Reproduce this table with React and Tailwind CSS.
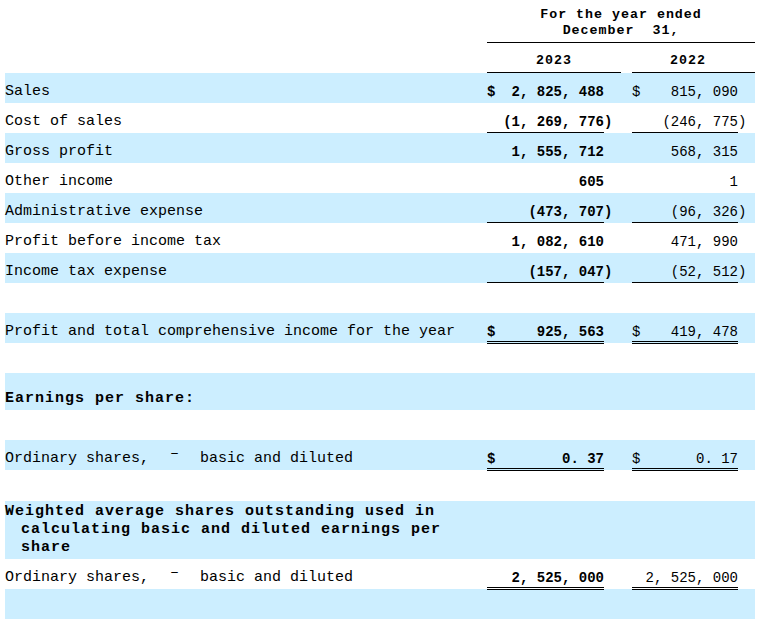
const GRID = 'grid grid-cols-[482px_13px_104px_17px_11px_13px_93px_17px]'

const LINES = [
  { label: 'Sales', blue: true, d1: '$', a: '2, 825, 488', d2: '$', b: '815, 090' },
  { label: 'Cost of sales', a: '(1, 269, 776', ap: ')', b: '(246, 775', bp: ')', rule: 'single' },
  { label: 'Gross profit', blue: true, a: '1, 555, 712', b: '568, 315' },
  { label: 'Other income', a: '605', b: '1' },
  { label: 'Administrative expense', blue: true, a: '(473, 707', ap: ')', b: '(96, 326', bp: ')', rule: 'single' },
  { label: 'Profit before income tax', a: '1, 082, 610', b: '471, 990' },
  { label: 'Income tax expense', blue: true, a: '(157, 047', ap: ')', b: '(52, 512', bp: ')', rule: 'single' },
  { blank: true },
  { label: 'Profit and total comprehensive income for the year', blue: true, d1: '$', a: '925, 563', d2: '$', b: '419, 478', rule: 'double' },
  { blank: true },
  { heading: 'Earnings per share:', blue: true, tall: true },
  { blank: true },
  { label: 'ordinary', blue: true, d1: '$', a: '0. 37', d2: '$', b: '0. 17', rule: 'double' },
  { blank: true, extra: true },
  { weighted: true, blue: true },
  { label: 'ordinary', a: '2, 525, 000', b: '2, 525, 000', rule: 'double' },
  { blank: true, blue: true },
]

const RULES = {
  single: 'border-b border-black',
  double: 'border-b-[3px] border-double border-black',
}

function Ordinary() {
  return (
    <>
      Ordinary shares,
      <span className="inline-block w-[51px] text-center relative -top-[5px]">–</span>
      basic and diluted
    </>
  )
}

function Line({ row }) {
  const bg = row.blue ? 'bg-[#cceeff]' : 'bg-white'

  if (row.blank) {
    return <div className={`${bg} ${row.extra ? 'h-[31px]' : 'h-[30px]'}`} />
  }

  if (row.heading) {
    return (
      <div className={`${bg} h-[37px] pt-[17px] leading-[18px] font-bold tracking-[1px]`}>
        {row.heading}
      </div>
    )
  }

  if (row.weighted) {
    return (
      <div className={`${GRID} ${bg} h-[58px]`}>
        <div className="pt-[2px] pl-[16px] -indent-[16px] leading-[18px] font-bold tracking-[1px]">
          Weighted average shares outstanding used in calculating basic and diluted earnings per share
        </div>
      </div>
    )
  }

  const rule = row.rule ? RULES[row.rule] : ''
  const cell = 'pt-[10px] leading-[18px] text-[14px]'

  return (
    <div className={`${GRID} ${bg} h-[30px]`}>
      <div className="pt-[10px] leading-[18px] whitespace-nowrap">
        {row.label === 'ordinary' ? <Ordinary /> : row.label}
      </div>
      <div className={`${cell} ${rule} font-bold`}>{row.d1}</div>
      <div className={`${cell} ${rule} font-bold text-right`}>{row.a}</div>
      <div className={`${cell} font-bold`}>{row.ap}</div>
      <div />
      <div className={`${cell} ${rule}`}>{row.d2}</div>
      <div className={`${cell} ${rule} text-right`}>{row.b}</div>
      <div className={cell}>{row.bp}</div>
    </div>
  )
}

export default function App() {
  return (
    <div className="min-h-[625px] w-[759px] bg-white text-black pl-[5px] font-['Liberation_Mono',monospace] text-[15px]">
      <div className="w-[750px]">
        {/* column header */}
        <div className={`${GRID} h-[43px]`}>
          <div className="col-start-2 col-span-7 border-b border-black pt-[7px] leading-[16px] text-center text-[13.3px] font-bold tracking-[1px]">
            <div>For the year ended</div>
            <div className="whitespace-pre">December  31,</div>
          </div>
        </div>
        <div className={`${GRID} h-[30px]`}>
          <div className="col-start-2 col-span-3 border-b border-black pt-[10px] leading-[16px] text-center text-[13.3px] font-bold tracking-[1px]">
            2023
          </div>
          <div className="col-start-6 col-span-3 border-b border-black pt-[10px] pr-[11px] leading-[16px] text-center text-[13.3px] font-bold tracking-[1px]">
            2022
          </div>
        </div>

        {LINES.map((row, i) => <Line key={i} row={row} />)}
      </div>
    </div>
  )
}
